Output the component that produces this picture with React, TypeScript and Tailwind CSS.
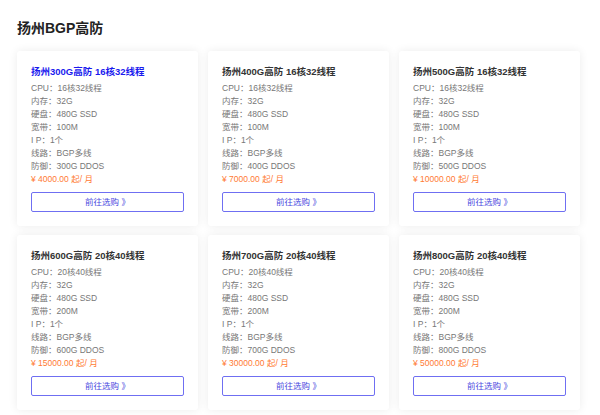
const plans = [
  { name: '扬州300G高防 16核32线程', cpu: '16核32线程', bw: '100M', ddos: '300G DDOS', price: '4000.00', active: true },
  { name: '扬州400G高防 16核32线程', cpu: '16核32线程', bw: '100M', ddos: '400G DDOS', price: '7000.00' },
  { name: '扬州500G高防 16核32线程', cpu: '16核32线程', bw: '100M', ddos: '500G DDOS', price: '10000.00' },
  { name: '扬州600G高防 20核40线程', cpu: '20核40线程', bw: '200M', ddos: '600G DDOS', price: '15000.00' },
  { name: '扬州700G高防 20核40线程', cpu: '20核40线程', bw: '200M', ddos: '700G DDOS', price: '30000.00' },
  { name: '扬州800G高防 20核40线程', cpu: '20核40线程', bw: '200M', ddos: '800G DDOS', price: '50000.00' },
];

export default function App() {
  return (
    <div className="min-h-[415px] bg-white px-[17px] pt-[18px] font-['Liberation_Sans','Noto_Sans_CJK_SC',sans-serif]">
      <h2 className="mb-[13px] text-[14px] leading-[20px] font-bold text-[#222]">扬州BGP高防</h2>
      <div className="grid grid-cols-[181px_181px_181px] gap-x-[10px] gap-y-[9px]">
        {plans.map((p) => (
          <div key={p.name} className="h-[175px] rounded-[3px] bg-white px-[14px] pt-[14px] shadow-[0_0_10px_rgba(0,0,0,0.08)]">
            <h3 className={`mb-[2.5px] text-[9.5px] leading-[14px] font-bold ${p.active ? 'text-[#1a1aee]' : 'text-[#333]'}`}>{p.name}</h3>
            <ul className="text-[8.5px] leading-[13px] text-[#777]">
              <li>CPU：{p.cpu}</li>
              <li>内存：32G</li>
              <li>硬盘：480G SSD</li>
              <li>宽带：{p.bw}</li>
              <li>I P：1个</li>
              <li>线路：BGP多线</li>
              <li>防御：{p.ddos}</li>
              <li className="text-[#ff7a33]">¥ {p.price} 起/ 月</li>
            </ul>
            <button className="mt-[6.5px] flex h-[20px] w-[153px] items-center justify-center rounded-[2px] border border-[#6f6ff2] text-[8.5px] text-[#4a4ae0]">
              前往选购 》
            </button>
          </div>
        ))}
      </div>
    </div>
  );
}
